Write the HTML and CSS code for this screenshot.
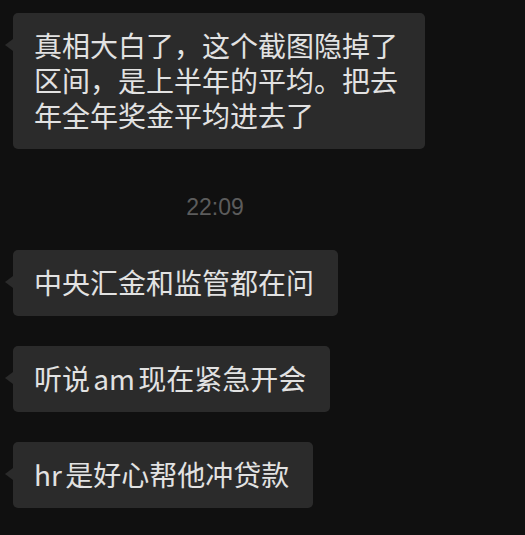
FILE: index.html
```html
<!DOCTYPE html>
<html lang="zh-CN">
<head>
    <meta charset="UTF-8">
    <meta name="viewport" content="width=device-width, initial-scale=1.0">
    <title>聊天</title>
    <link rel="stylesheet" href="styles.css">
</head>
<body>
    <div class="chat">
        <div class="msg">
            <div class="bubble">真相大白了，这个截图隐掉了区间，是上半年的平均。把去年全年奖金平均进去了</div>
        </div>
        <div class="time">22:09</div>
        <div class="msg">
            <div class="bubble">中央汇金和监管都在问</div>
        </div>
        <div class="msg">
            <div class="bubble">听说 am 现在紧急开会</div>
        </div>
        <div class="msg">
            <div class="bubble">hr 是好心帮他冲贷款</div>
        </div>
    </div>
</body>
</html>
```

FILE: styles.css
```css
body {
    margin: 0;
    background-color: #101010;
    font-family: "Noto Sans CJK SC", "Noto Sans", sans-serif;
}

.chat {
    display: flex;
    flex-direction: column;
    align-items: flex-start;
    padding: 13px 0 0 13px;
}

.msg {
    margin-bottom: 30px;
}

.bubble {
    position: relative;
    max-width: 412px;
    box-sizing: border-box;
    padding: 15px 24px 16px 21px;
    background-color: #2b2b2b;
    border-radius: 5px;
    color: #e2e2e2;
    font-size: 28px;
    line-height: 35px;
    word-spacing: -3px;
}

/* little arrow on the left */
.bubble::before {
    content: "";
    position: absolute;
    left: -8px;
    top: 26px;
    border-style: solid;
    border-width: 6px 8px 6px 0;
    border-color: transparent #2b2b2b transparent transparent;
}

.time {
    align-self: stretch;
    margin: 13px 0 28px;
    padding-right: 108px;
    text-align: center;
    color: #5c5c5c;
    font-family: "Liberation Sans", Arial, sans-serif;
    font-size: 23px;
    line-height: 30px;
}
```
